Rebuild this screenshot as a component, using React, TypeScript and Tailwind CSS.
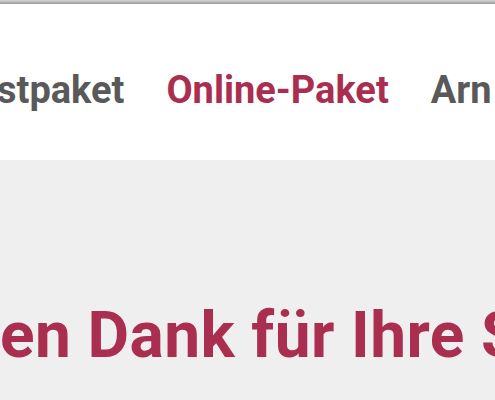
const navItems = [
  { label: 'stpaket', active: false },
  { label: 'Online-Paket', active: true },
  { label: 'Arn', active: false }
];

export default function App() {
  return (
    <div
      className="w-[495px] h-[400px] overflow-hidden bg-[#efefef]"
      style={{ fontFamily: 'Roboto, "Liberation Sans", sans-serif' }}
    >
      <div className="h-[4px] bg-gradient-to-b from-[#d6d6d6] to-[#9a9a9a]" />
      <header className="h-[156px] bg-white pt-[67px] overflow-hidden">
        <nav className="flex gap-[42px] -ml-[3px] whitespace-nowrap font-bold text-[38px] leading-none">
          {navItems.map((item) => (
            <span key={item.label} className={item.active ? 'text-[#a92e50]' : 'text-[#595959]'}>
              {item.label}
            </span>
          ))}
        </nav>
      </header>
      <main className="pt-[144px] overflow-hidden">
        <h1 className="whitespace-nowrap font-bold text-[64px] tracking-[0.4px] leading-none text-[#a92e50]">
          en Dank für Ihre S
        </h1>
      </main>
    </div>
  );
}
